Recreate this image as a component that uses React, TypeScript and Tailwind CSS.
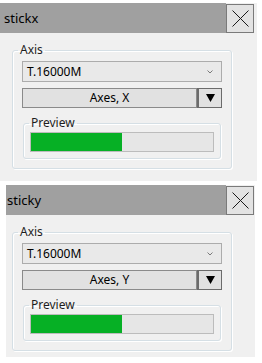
interface AxisPanelProps {
  title: string;
  device: string;
  axis: string;
  progress: number;
  frameClass: string;
  titleClass: string;
  spacerClass: string;
  groupClass: string;
}

function AxisPanel({ title, device, axis, progress, frameClass, titleClass, spacerClass, groupClass }: AxisPanelProps) {
  return (
    <section className={`flex flex-col bg-[#f0f0f0] ${frameClass}`}>
      <header className="flex h-[30px] shrink-0">
        <div className={`flex flex-1 items-center bg-[#a0a0a0] text-[13px] leading-[18px] text-black ${titleClass}`}>{title}</div>
        <button type="button" className="mt-[1px] flex h-[29px] w-[28px] shrink-0 items-center justify-center border border-[#7a7a7a] bg-[#e3e3e3]">
          <svg width="17" height="17" viewBox="0 0 17 17">
            <line x1="0.5" y1="0.5" x2="16.5" y2="16.5" stroke="#1a1a1a" strokeWidth="1" />
            <line x1="16.5" y1="0.5" x2="0.5" y2="16.5" stroke="#1a1a1a" strokeWidth="1" />
          </svg>
        </button>
        <div className={spacerClass} />
      </header>

      <fieldset className={`mt-[10px] w-[220px] rounded-[3px] border border-[#d5dfe5] px-[9px] pb-[9px] shadow-[inset_1px_1px_0_#ffffff,1px_1px_0_#ffffff] ${groupClass}`}>
        <legend className="-ml-[4px] px-[2px] text-[12px] leading-[14px] text-[#1e1e1e]">Axis</legend>

        <div className="mt-[4px] flex h-[21px] items-center justify-between border border-[#acacac] bg-[#e9e9e9] pl-[4px] pr-[8px] text-[12px] text-black">
          <span>{device}</span>
          <svg width="6" height="4" viewBox="0 0 6 4" className="text-[#7a7a7a]">
            <polyline points="0.5,0.5 3,3 5.5,0.5" fill="none" stroke="currentColor" strokeWidth="1" />
          </svg>
        </div>

        <div className="mt-[6px] flex h-[20px]">
          <div className="flex flex-1 items-center justify-center border border-[#8a8a8a] bg-[#e1e1e1] text-[12px] text-black">{axis}</div>
          <div className="flex w-[25px] items-center justify-center border border-l-2 border-[#6b6b6b] bg-[#e1e1e1]">
            <svg width="9" height="8" viewBox="0 0 9 8">
              <polygon points="0,0 9,0 4.5,8" fill="#000000" />
            </svg>
          </div>
        </div>

        <fieldset className="mx-[1px] mt-[8px] rounded-[3px] border border-[#d5dfe5] px-[6px] pb-[6px] shadow-[inset_1px_1px_0_#ffffff,1px_1px_0_#ffffff]">
          <legend className="-ml-[1px] px-[2px] text-[12px] leading-[14px] text-[#1e1e1e]">Preview</legend>
          <div className="mt-[2px] h-[20px] border border-[#bcbcbc] bg-[#e6e6e6]">
            <div className="h-full bg-[#06b025]" style={{ width: `${progress}%` }} />
          </div>
        </fieldset>
      </fieldset>
    </section>
  );
}

export default function App() {
  return (
    <div className="h-[363px] w-[262px] overflow-hidden bg-white font-['Segoe_UI','Noto_Sans',sans-serif]">
      <div className="h-[3px]" />
      <AxisPanel
        title="stickx"
        device="T.16000M"
        axis="Axes, X"
        progress={50}
        frameClass="h-[178px] w-[257px]"
        titleClass="pl-[4px]"
        spacerClass="w-[3px]"
        groupClass="ml-[12px]"
      />
      <div className="h-[4px]" />
      <AxisPanel
        title="sticky"
        device="T.16000M"
        axis="Axes, Y"
        progress={50}
        frameClass="ml-[6px] h-[172px] w-[249px]"
        titleClass="pl-[1px]"
        spacerClass="w-[1px]"
        groupClass="ml-[6px]"
      />
    </div>
  );
}
